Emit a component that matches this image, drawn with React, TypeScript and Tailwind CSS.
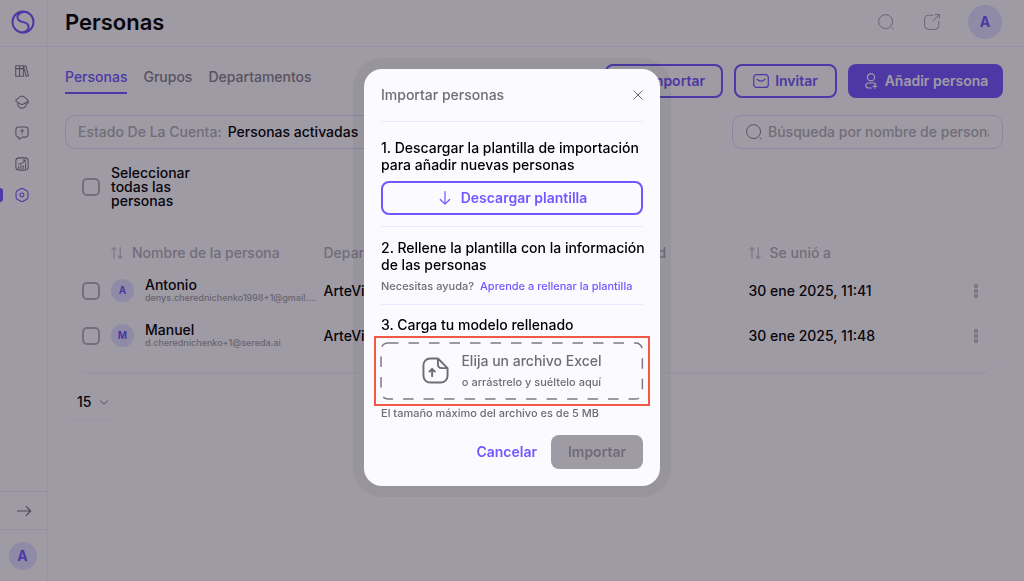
import React from 'react';

type IconProps = { className?: string };

const people = [
  { name: 'Antonio', email: 'denys.cherednichenko1998+1@gmail....', team: 'ArteVivo', joined: '30 ene 2025, 11:41' },
  { name: 'Manuel', email: 'd.cherednichenko+1@sereda.ai', team: 'ArteVivo', joined: '30 ene 2025, 11:48' },
];

function Svg({ className, size = 16, stroke = 1.2, children }: IconProps & { size?: number; stroke?: number; children: React.ReactNode }) {
  return (
    <svg
      className={className}
      viewBox={`0 0 ${size} ${size}`}
      fill="none"
      stroke="currentColor"
      strokeWidth={stroke}
      strokeLinecap="round"
      strokeLinejoin="round"
      aria-hidden="true"
    >
      {children}
    </svg>
  );
}

function Logo() {
  return (
    <Svg className="w-6 h-6 text-[#7356ff]" size={24} stroke={2}>
      <circle cx="12" cy="12" r="10.5" />
      <path d="M15.8 2.300C10.500 1.300 6.400 3.800 6.400 7.300c0 3.700 3.500 4.300 6.300 4.900 3 .7 5.100 1.800 4.900 4.900-.2 2.600-2.200 4.400-5 5.100" />
    </Svg>
  );
}

function SearchIcon({ className }: IconProps) {
  return (
    <Svg className={className} stroke={1}>
      <circle cx="7.600" cy="7.600" r="7" />
      <path d="M14 13.700l1.300 1.400" />
    </Svg>
  );
}

function SortIcon() {
  return (
    <Svg className="w-3 h-3" size={12} stroke={1}>
      <path d="M3 11.500V.7M.6 3L3 .6 5.400 3M9.200.6v10.800M6.900 9l2.300 2.400L11.500 9" />
    </Svg>
  );
}

function Avatar({ letter, className }: { letter: string; className: string }) {
  return (
    <span className={`flex items-center justify-center shrink-0 rounded-full bg-[#e2deff] text-[#7356ff] font-bold ${className}`}>
      {letter}
    </span>
  );
}

function Checkbox({ label }: { label: string }) {
  return (
    <input
      type="checkbox"
      aria-label={label}
      className="block appearance-none shrink-0 w-[18px] h-[18px] border-2 border-[#b3b1b8] rounded-[5px]"
    />
  );
}

const navItems = [
  {
    label: 'Biblioteca',
    icon: (
      <path d="M.8 2h4.400v12H.8zM5.200 2h4.300v12H5.200zM.8 5.300h8.700M9.800 2.600l2.500-.6L15.400 13.300l-2.700.7z" />
    ),
  },
  {
    label: 'Formación',
    icon: (
      <>
        <path d="M1 6.300c0-.8.500-1.200 1.200-1.600l3.900-2.800c1.200-.8 2.600-.8 3.800 0l3.900 2.800c1.400 1 1.400 2.400 0 3.300l-3.900 2.200c-1.200.8-2.600.8-3.800 0L2.200 7.900C1.500 7.500 1 7.100 1 6.300z" />
        <path d="M3.300 9v2.300c0 1.700 2 3.700 4.700 3.700s4.700-2 4.700-3.700V9M14.900 6.500v3.500" />
      </>
    ),
  },
  {
    label: 'Preguntas',
    icon: (
      <>
        <path d="M4 1.200h8a3 3 0 013 3v5.500a3 3 0 01-3 3H8.500l-3.200 2.300c-.4.2-.8 0-.8-.5v-1.800H4a3 3 0 01-3-3V4.200a3 3 0 013-3z" />
        <path d="M6.800 5.600c0-1.700 2.600-1.600 2.500 0 0 .9-1.300.9-1.300 2M8 9.600v.1" />
      </>
    ),
  },
  {
    label: 'Informes',
    icon: (
      <>
        <rect x="1" y="1" width="14" height="14" rx="3.500" />
        <path d="M4.200 13v-2M6.800 13V9.500M9.400 13v-3M12 13V7.500M4 8c3 0 5.500-1.500 7.500-4.300M9.300 3.500h2.400v2.300" />
      </>
    ),
  },
  {
    label: 'Ajustes',
    active: true,
    icon: (
      <>
        <path d="M6.700.8a2.600 2.600 0 012.600 0l4.200 2.400a2.600 2.600 0 011.300 2.200v5.200a2.600 2.600 0 01-1.300 2.200l-4.200 2.400a2.600 2.600 0 01-2.600 0l-4.200-2.400a2.600 2.600 0 01-1.300-2.200V5.400a2.600 2.600 0 011.300-2.200z" />
        <circle cx="8" cy="8" r="2.200" />
      </>
    ),
  },
];

function Sidebar() {
  return (
    <aside className="w-12 shrink-0 flex flex-col border-r border-[#f0eef8]">
      <a href="#inicio" aria-label="Inicio" className="h-[47px] pr-[2px] pb-[2px] flex items-center justify-center border-b border-[#ebe8ff]">
        <Logo />
      </a>
      <nav className="flex flex-col pt-2">
        {navItems.map(item => (
          <a
            key={item.label}
            href="#nav"
            aria-label={item.label}
            className={`relative flex items-center justify-center h-8 pr-1 -mb-px ${item.active ? 'text-[#7356ff]' : 'text-[#7d7a84]'}`}
          >
            {item.active && <span className="absolute left-0 w-[3px] h-[14px] rounded-r bg-[#7356ff]" />}
            <Svg className="w-[14px] h-[14px]">{item.icon}</Svg>
          </a>
        ))}
      </nav>
      <button aria-label="Expandir menú" className="mt-auto h-[38px] flex items-center justify-center border-t border-[#ebe8f5] text-[#75727b]">
        <Svg className="w-4 h-4">
          <path d="M1.500 8h13M10.300 3.600L14.600 8l-4.300 4.400" />
        </Svg>
      </button>
      <div className="h-[52px] pr-[2px] flex items-center justify-center border-t border-[#ebe8f5]">
        <Avatar letter="A" className="w-7 h-7 text-sm" />
      </div>
    </aside>
  );
}

function Header() {
  return (
    <header className="h-[47px] pb-[2px] pl-[17px] pr-[22px] flex items-center border-b border-[#ebe8ff]">
      <h1 className="text-[22px] leading-7 font-semibold">Personas</h1>
      <div className="ml-auto flex items-center text-[#a09ea6]">
        <button aria-label="Buscar">
          <SearchIcon className="w-4 h-4" />
        </button>
        <button aria-label="Compartir" className="ml-[30px] mr-7">
          <Svg className="w-4 h-4" stroke={1}>
            <path d="M9 1.200H4.500A3.900 3.900 0 00.6 5.100v6.400a3.900 3.900 0 003.900 3.900h6.400a3.900 3.900 0 003.900-3.900V7.500M9 7L15.200.7M11.300.6h4v4" />
          </Svg>
        </button>
        <Avatar letter="A" className="w-[34px] h-[34px] text-sm" />
      </div>
    </header>
  );
}

function Toolbar() {
  return (
    <div className="flex items-start justify-between">
      <nav className="flex gap-4 pt-[3px] text-sm font-medium text-[#85828b]">
        <a href="#personas" className="h-[27px] border-b-2 border-[#7356ff] text-[#7356ff]">Personas</a>
        <a href="#grupos">Grupos</a>
        <a href="#departamentos">Departamentos</a>
      </nav>
      <div className="flex gap-[11px] text-sm font-semibold">
        <button className="w-[118px] h-[34px] flex items-center justify-center gap-2 border-2 border-[#7356ff] rounded-lg text-[#7356ff]">
          <Svg className="w-4 h-4">
            <path d="M8 1v10M4 7l4 4 4-4M1 14h14" />
          </Svg>
          Importar
        </button>
        <button className="w-[103px] h-[34px] flex items-center justify-center gap-[6px] border-2 border-[#7356ff] rounded-lg text-[#7356ff]">
          <Svg className="w-4 h-4">
            <rect x=".7" y="1.600" width="14.600" height="12.800" rx="3" />
            <path d="M4 6.200c2.600 2.600 5.400 2.600 8 0" />
          </Svg>
          Invitar
        </button>
        <button className="w-[155px] h-[34px] flex items-center justify-center gap-[6px] rounded-lg bg-[#7356ff] text-[#fbfaff]">
          <Svg className="w-4 h-4">
            <circle cx="8" cy="4.300" r="3.600" />
            <path d="M8.500 15H6.200c-4.300 0-4.700-4.700-.5-5h4.600c1.200 0 2 .4 2.500 1M11.800 11.600v3.600M10 13.400h3.600" />
          </Svg>
          Añadir persona
        </button>
      </div>
    </div>
  );
}

function Filters() {
  return (
    <div className="mt-[17px] flex justify-between text-sm font-medium">
      <button className="w-[320px] h-[34px] px-3 flex items-center gap-[6px] border border-[#dcd8f8] rounded-[10px] whitespace-nowrap">
        <span className="text-[#b0aeb6]">Estado De La Cuenta:</span>
        <span>Personas activadas</span>
      </button>
      <label className="w-[271px] h-[34px] px-[13px] flex items-center gap-[6px] border border-[#dcd8f8] rounded-[10px] text-[#85828b]">
        <SearchIcon className="w-4 h-4 shrink-0" />
        <input
          type="text"
          aria-label="Búsqueda por nombre de persona"
          placeholder="Búsqueda por nombre de persona"
          className="w-full min-w-0 bg-transparent outline-none placeholder:text-[#b0aeb6]"
        />
      </label>
    </div>
  );
}

function PeopleTable() {
  return (
    <div className="mx-[7px] mt-[30px] pb-[14px] border-b-2 border-[#f3f1fa] rounded-b-2xl">
      <table className="w-full table-fixed text-left text-sm font-medium">
        <colgroup>
          <col className="w-[39px]" />
          <col className="w-[23%]" />
          <col className="w-[25%]" />
          <col className="w-[21%]" />
          <col />
          <col className="w-10" />
        </colgroup>
        <thead className="text-[#b0aeb6]">
          <tr className="h-[30px]">
            <th />
            <th className="font-medium">
              <span className="flex items-center gap-[9px]"><SortIcon />Nombre de la persona</span>
            </th>
            <th className="font-medium">Departamento</th>
            <th className="pl-1 font-medium">Última actividad</th>
            <th className="font-medium">
              <span className="flex items-center gap-[9px]"><SortIcon />Se unió a</span>
            </th>
            <th />
          </tr>
        </thead>
        <tbody>
          {people.map(person => (
            <tr key={person.name} className="h-[45px]">
              <td className="pl-[10px]">
                <Checkbox label={person.name} />
              </td>
              <td>
                <div className="flex items-center gap-[11px]">
                  <Avatar letter={person.name[0]} className="w-[23px] h-[23px] text-[10px]" />
                  <div className="min-w-0 pb-[2px]">
                    <div className="leading-4">{person.name}</div>
                    <div className="text-[9px] leading-[10px] text-[#a09ea6] whitespace-nowrap">{person.email}</div>
                  </div>
                </div>
              </td>
              <td>{person.team}</td>
              <td />
              <td>{person.joined}</td>
              <td>
                <button aria-label="Más acciones" className="block mx-auto text-[#a09ea6]">
                  <Svg className="w-4 h-4">
                    <circle cx="8" cy="3" r="1.500" />
                    <circle cx="8" cy="8" r="1.500" />
                    <circle cx="8" cy="13" r="1.500" />
                  </Svg>
                </button>
              </td>
            </tr>
          ))}
        </tbody>
      </table>
    </div>
  );
}

function ImportDialog() {
  return (
    <div
      role="dialog"
      aria-modal="true"
      aria-label="Importar personas"
      className="w-[296px] px-[17px] pt-4 pb-[17px] rounded-[18px] bg-[#fbfaff] shadow-[0_0_0_11px_rgba(0,0,0,0.04)]"
    >
      <div className="h-9 mb-[17px] box-content flex items-start justify-between border-b border-[#ebe8ff] text-[#6f6c76]">
        <h2 className="text-sm font-medium">Importar personas</h2>
        <button aria-label="Cerrar" className="py-1">
          <Svg className="w-[10px] h-3" size={12}>
            <path d="M1 1l10 10M11 1L1 11" />
          </Svg>
        </button>
      </div>

      <section className="pb-[11px] border-b border-[#ebe8ff]">
        <h3 className="text-sm leading-[17px] font-medium whitespace-nowrap">
          1. Descargar la plantilla de importación<br />para añadir nuevas personas
        </h3>
        <button className="mt-2 w-full h-[34px] flex items-center justify-center gap-2 border-2 border-[#7356ff] rounded-lg text-sm font-semibold text-[#7356ff]">
          <Svg className="w-4 h-4">
            <path d="M8 1.500v12.500M3.300 9.500L8 14.200l4.700-4.700" />
          </Svg>
          Descargar plantilla
        </button>
      </section>

      <section className="pt-3 pb-[10px] border-b border-[#ebe8ff]">
        <h3 className="text-sm leading-[17px] font-medium whitespace-nowrap">
          2. Rellene la plantilla con la información<br />de las personas
        </h3>
        <p className="mt-[5px] text-[11px] leading-4 flex gap-[6px] whitespace-nowrap font-medium text-[#6f6c76]">
          Necesitas ayuda?
          <a href="#ayuda" className="text-[#7356ff]">Aprende a rellenar la plantilla</a>
        </p>
      </section>

      <section className="pt-[11px]">
        <h3 className="text-sm leading-[17px] font-medium">3. Carga tu modelo rellenado</h3>
        <div className="-mx-[7px] mt-[3px] p-1 border-2 border-[#ee5a45]">
          <button className="relative w-full h-[58px] pb-[2px] flex items-center justify-center gap-3 text-[#6f6c76]">
            <svg className="absolute inset-0 w-full h-full" fill="none" aria-hidden="true">
              <rect x="1" y="1" width="99%" height="56" rx="7" stroke="#7d7a84" strokeWidth="1.500" strokeDasharray="10.500 10" />
            </svg>
            <Svg className="w-[27px] h-[27px]" size={28} stroke={2}>
              <path d="M16.500 1.500H8.500a7 7 0 00-7 7v11a7 7 0 007 7h11a7 7 0 007-7V11.500zM16.500 1.500v6c0 2.500 1.500 4 4 4h6M10.500 20v-7.500M7.800 15l2.700-2.700 2.700 2.700" />
            </Svg>
            <span className="text-center font-medium whitespace-nowrap">
              <span className="block text-sm">Elija un archivo Excel</span>
              <span className="block mt-[3px] text-[11px] leading-4">o arrástrelo y suéltelo aquí</span>
            </span>
          </button>
        </div>
        <p className="mt-px text-[11px] leading-3 font-medium text-[#6f6c76]">El tamaño máximo del archivo es de 5 MB</p>
      </section>

      <div className="mt-4 flex justify-end gap-[14px] text-sm font-semibold">
        <button className="text-[#7356ff]">Cancelar</button>
        <button disabled className="w-[92px] h-[34px] rounded-lg bg-[#9e9ba5] text-[#6f6c76]">Importar</button>
      </div>
    </div>
  );
}

export default function App() {
  return (
    <div className="min-h-screen flex bg-[#fbfaff] text-black font-['Inter',sans-serif]">
      <Sidebar />
      <main className="flex-1 min-w-0">
        <Header />
        <div className="pl-[17px] pr-[21px] pt-[17px]">
          <Toolbar />
          <Filters />
          <label className="mt-[17px] pl-[17px] flex items-center gap-[11px] text-sm leading-[14px] font-medium">
            <Checkbox label="Seleccionar todas las personas" />
            <span className="w-20">Seleccionar todas las personas</span>
          </label>
          <PeopleTable />
          <label className="relative mt-[18px] ml-[7px] w-10 h-7 flex items-start border-b border-[#f0eef8] text-sm font-medium text-[#85828b]">
            <select aria-label="Filas por página" className="appearance-none w-full pl-[5px] bg-transparent text-black">
              <option>15</option>
            </select>
            <Svg className="w-2 h-5 mr-1 shrink-0" size={8} stroke={1}>
              <path d="M0 2.500l4 3.500 4-3.500" />
            </Svg>
          </label>
        </div>
      </main>

      <div className="fixed inset-0 flex items-start justify-center pt-[69px] bg-[#130d1e]/40">
        <ImportDialog />
      </div>
    </div>
  );
}
